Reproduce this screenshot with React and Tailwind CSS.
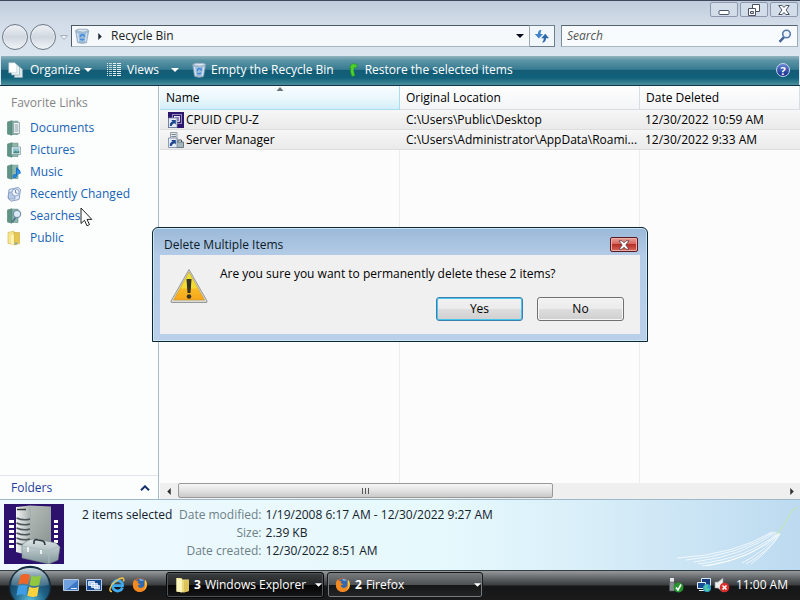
import React from 'react';

const BinIcon = ({ className }) => (
  <svg viewBox="0 0 16 16" className={className} aria-hidden="true">
    <path d="M1.500 2.500 4 1.200h9l1.800 1.300-2.300 12.200-4.500.8-4.500-1z" fill="#9fbcd6" stroke="#7f98ae" strokeWidth=".6" />
    <path d="M2 2.700 4.300 1.600h8.400l1.600 1.100L9 4z" fill="#dfeaf3" stroke="#8a9cad" strokeWidth=".4" />
    <path d="M3.500 5l1.200 8.500M12.700 5l-1.200 8.500" stroke="#d5e5f2" strokeWidth="1.200" />
    <path d="M6 9 7.500 6.500 9.800 7l.7 1.800M10 10.800l-1.800 1.200-2-.9" fill="none" stroke="#3f8ae0" strokeWidth="1.500" />
  </svg>
);

const Triangle = ({ className = 'h-1 w-2' }) => (
  <svg viewBox="0 0 8 4" className={className} aria-hidden="true">
    <path d="M0 0h8L4 4z" fill="currentColor" />
  </svg>
);

const PagesIcon = () => (
  <svg viewBox="0 0 16 16" className="size-4" aria-hidden="true">
    <path d="M6.500 5.500h6l2 2v8h-8z" fill="#d7e6ea" stroke="#8eaab4" strokeWidth=".6" />
    <path d="M3.500 3h6l2 2v8h-8z" fill="#eaf3f4" stroke="#8eaab4" strokeWidth=".6" />
    <path d="M.8.8h6l2 2v8h-8z" fill="#fff" stroke="#b2c6cc" strokeWidth=".6" />
  </svg>
);

const ViewsIcon = () => (
  <svg viewBox="0 0 14 14" className="size-[14px]" aria-hidden="true">
    {[0, 2, 4, 6, 8, 10, 12].map((y) => (
      <g key={y} fill="#e5f1f4">
        <rect x="0" y={y} width="1" height="1" />
        <rect x="2" y={y} width="3" height="1" opacity=".75" />
        <rect x="6" y={y} width="3" height="1" />
        <rect x="10" y={y} width="4" height="1" />
      </g>
    ))}
  </svg>
);

function PlaceIcon({ kind }) {
  if (kind === 'recent')
    return (
      <svg viewBox="0 0 16 16" className="size-4" aria-hidden="true">
        <path d="M3 3.500 12 1.500l2.500 2-1.500 10-8 1.700L2 12z" fill="#dfe8f5" stroke="#8b9fc4" />
        <path d="M4 6h5v7H2.500V8z" fill="#b8cae6" stroke="#7d96c1" strokeWidth=".7" />
        <circle cx="9.500" cy="6.500" r="3.600" fill="#edf3fc" stroke="#7a94bf" strokeWidth=".8" />
        <path d="M9.500 4v2.700l2 .6" fill="none" stroke="#4f6fa8" strokeWidth=".8" />
      </svg>
    );
  if (kind === 'public')
    return (
      <svg viewBox="0 0 16 16" className="size-4" aria-hidden="true">
        <path d="M2 2.500 8 1l.5 13.500-6.500-1z" fill="#f6e58d" stroke="#d2b64d" strokeWidth=".6" />
        <path d="M8 2.500h5.500v11L8 15z" fill="#e6c64f" stroke="#c9a93d" strokeWidth=".6" />
        <path d="M5 5.500 8 4v11l-3-1.400z" fill="#fff4b5" />
        <path d="M9 12.500h2v2H9z" fill="#77a9d6" />
      </svg>
    );
  return (
    <svg viewBox="0 0 16 16" className="size-4" aria-hidden="true">
      <path d="M1.500 2 6 .7v14.500L1.500 14z" fill="#5f9385" stroke="#4b7d71" strokeWidth=".6" />
      <path d="M6 1.200h6v13.300H6z" fill="#8db8ab" stroke="#5b8e82" strokeWidth=".6" />
      {kind === 'documents' && (
        <>
          <path d="M7.500 2.500h6v11h-6z" fill="#eef3f5" stroke="#8197a0" strokeWidth=".7" />
          <path d="M8.700 5h3.600M8.700 7h3.600M8.700 9h3.600M8.700 11h3.600" stroke="#71858f" strokeWidth=".8" />
        </>
      )}
      {kind === 'pictures' && (
        <>
          <path d="M5.500 5h9v7.500h-9z" fill="#f1f6f7" stroke="#76939c" strokeWidth=".7" />
          <path d="M6.800 6.300h6.400v5H6.800z" fill="#8cc3cf" />
          <path d="M6.800 11.300 9.500 8.500l1.700 1.300 2-1v2.500z" fill="#4a8979" />
        </>
      )}
      {kind === 'music' && (
        <path d="M10.500 11.500V3.500c.6 2.300 4.300 2.300 3.700 6M10.500 11.500c0 1.400-1.300 2.200-2.700 2-1.300-.3-1.100-2.500.8-2.700.8-.1 1.900 0 1.900.7z" fill="#2f94e6" stroke="#1b72c8" strokeWidth="1.100" />
      )}
      {kind === 'searches' && (
        <>
          <path d="M10 9 6.300 14" stroke="#51718e" strokeWidth="1.800" />
          <circle cx="11" cy="6" r="3.600" fill="#dcebf6" stroke="#7590a8" strokeWidth="1.200" />
        </>
      )}
    </svg>
  );
}

const Shortcut = () => (
  <>
    <path d="M.5 6h8.500v9.500H.5z" fill="#e6ecf5" stroke="#7485a3" strokeWidth=".8" />
    <path d="M1.800 14c0-3 1-4.200 2.700-4.500L3.200 8h4.600v4.600l-1.400-1.400C4.900 11.600 4.200 12.500 3.700 14z" fill="#20468f" />
  </>
);

const CpuIcon = () => (
  <svg viewBox="0 0 16 16" className="size-4 shrink-0" aria-hidden="true">
    <path d="M0 0h16v16H0z" fill="#2d1670" />
    <rect x="4.500" y="2.500" width="9" height="9" fill="none" stroke="#fff" strokeDasharray="1 1" />
    <rect x="6.500" y="4.500" width="5" height="5" fill="#8b7cbb" stroke="#fff" strokeWidth=".8" />
    <Shortcut />
  </svg>
);

const ServerIcon = () => (
  <svg viewBox="0 0 16 16" className="size-4 shrink-0" aria-hidden="true">
    <path d="M2.500.5H9V9H2.500z" fill="#e3e8eb" stroke="#7c8a94" strokeWidth=".8" />
    <path d="M3.500 2.500h4.500M3.500 4.500h4.500" stroke="#6d7a84" strokeWidth=".9" />
    <path d="M8 10h7.500v5.500H8z" fill="#a3b4ba" stroke="#52666e" strokeWidth=".8" />
    <path d="M10 10V8h3.500v2" fill="none" stroke="#4c5b62" />
    <Shortcut />
  </svg>
);

const ServerThumb = () => (
  <svg viewBox="0 0 60 60" className="size-[60px] shrink-0" aria-hidden="true">
    <defs>
      <linearGradient id="side" x1="0" x2="1" y2="1"><stop stopColor="#c2c8c5" /><stop offset="1" stopColor="#858f8b" /></linearGradient>
      <linearGradient id="front" x1="0" x2="1"><stop stopColor="#f3f5f5" /><stop offset="1" stopColor="#a4adab" /></linearGradient>
      <linearGradient id="box" y2="1" x2="0"><stop stopColor="#dfe7e8" /><stop offset="1" stopColor="#7f9498" /></linearGradient>
    </defs>
    <path d="M0 0h60v60H0z" fill="#2c126c" />
    {[17, 22, 27, 32, 37, 42].map((y) => (
      <g key={y} fill="#fff"><rect x="5" y={y - 1} width="5" height="3" /><rect x="50" y={y - 1} width="4" height="3" /></g>
    ))}
    <path d="M12 3 26 1.500 47 2.500v40L26 51z" fill="url(#side)" />
    <path d="M12 3 27 3.500V52l-15-4z" fill="url(#front)" />
    <path d="M13 5.500h9" stroke="#333" strokeWidth="1.500" />
    {[14, 19, 24, 29, 34, 39].map((y) => <path key={y} d={`M12.500 ${y}q7 3 13.500 1`} fill="none" stroke="#4c5557" strokeWidth="1.500" />)}
    <path d="M18 41q7-7 15-6l19 4 4 4-2 13-9 4-27-6z" fill="url(#box)" stroke="#6f8387" strokeWidth=".6" />
    <path d="M18 42l27 5 10-5M45 47v12" fill="none" stroke="#a8bbbf" strokeWidth="1" />
    <path d="M30 40v-3q1-2 4-1l5 1q2 1 2 4" fill="none" stroke="#303b40" strokeWidth="1.600" />
    <path d="M24 43v5M37 46v4" stroke="#f3f8f8" strokeWidth="1.800" />
  </svg>
);

const FolderIcon = () => (
  <svg viewBox="0 0 14 16" className="h-4 w-[14px] shrink-0" aria-hidden="true">
    <path d="M.5 1h5l1 1.500h6V14l-5 1.500-7-1z" fill="#ecd979" />
    <path d="M.5 1 6 2v13.500l-5.500-1z" fill="#fbf3bc" />
    <path d="m8 4 5-1.500V14l-5 1.500z" fill="#dcc35a" />
  </svg>
);

const FirefoxIcon = () => (
  <svg viewBox="0 0 16 16" className="size-4 shrink-0" aria-hidden="true">
    <circle cx="8" cy="8" r="7" fill="#e8651b" />
    <circle cx="8.500" cy="6.500" r="5" fill="#3268ae" />
    <path d="M7 2.500c2-1 4 0 5 1.500-2-.5-3 .5-5-1.500z" fill="#79b6e4" />
    <path d="M1.200 5 2.500 2.500 4 4.200 6.500 4 5.600 6l2.900 1.200-2.700 1.100c0 3 4.500 3.700 6.400.7l.2-3 1.200-2c2.600 5-1 11-6 11C2 15 0 9.500 1.200 5z" fill="#f38a20" />
    <path d="M12.500 4.500 13.700 3c2 4 1 8.500-2.200 10.500 2-2.500 2.500-5.500 1-9z" fill="#fbd047" />
  </svg>
);

const StartOrb = () => (
  <svg viewBox="0 0 44 44" className="size-11" aria-hidden="true">
    <defs>
      <radialGradient id="orb" cx=".5" cy=".85" r=".85"><stop stopColor="#5cc0dc" /><stop offset=".45" stopColor="#1f6287" /><stop offset="1" stopColor="#0c304e" /></radialGradient>
      <linearGradient id="shine" x2="0" y2="1"><stop stopColor="#e8f2f4" stopOpacity=".9" /><stop offset="1" stopColor="#7b9ba8" stopOpacity=".35" /></linearGradient>
    </defs>
    <circle cx="22" cy="22" r="20.500" fill="url(#orb)" stroke="#172c38" strokeWidth="1.500" />
    <path d="M3 20C4 8 12 3 22 3s18 5 19 17q-19 4-38 0z" fill="url(#shine)" />
    <path d="M12.500 10.500q4.500-2.500 9.500-.5L20 19.500q-5-2-9.700.3z" fill="#ee6528" />
    <path d="M23.500 10.500q4.500 2 9.500-.3L31.200 20q-4.700 2-9.700 0z" fill="#90c83f" />
    <path d="M10 21.500q4.500-2.500 9.700-.5L17.900 30.500q-5-2-9.500.3z" fill="#3e9de3" />
    <path d="M21.200 21.800q4.800 2 9.700-.3L29.200 31q-4.500 2-9.800-.2z" fill="#ffd33d" />
  </svg>
);

const toolItem = 'flex h-full items-center whitespace-nowrap';
const places = [
  ['documents', 'Documents'], ['pictures', 'Pictures'], ['music', 'Music'],
  ['recent', 'Recently Changed'], ['searches', 'Searches'], ['public', 'Public'],
];
const files = [
  { Icon: CpuIcon, name: 'CPUID CPU-Z', path: 'C:\\Users\\Public\\Desktop', date: '12/30/2022 10:59 AM' },
  { Icon: ServerIcon, name: 'Server Manager', path: 'C:\\Users\\Administrator\\AppData\\Roami...', date: '12/30/2022 9:33 AM' },
];
const captionButton = 'flex h-[15px] w-7 items-center justify-center rounded-[2px] border border-[#8c98ad] bg-[#d3dde9]';

function TitleBar() {
  return (
    <div className="flex h-6 shrink-0 justify-end gap-[2px] border-t border-[#41485c] pt-px pr-[2px]">
      <button aria-label="Minimize" className={captionButton}>
        <svg viewBox="0 0 12 12" className="size-3"><rect x="1" y="6.500" width="10" height="4" rx="1" fill="#fff" stroke="#4a5365" /></svg>
      </button>
      <button aria-label="Restore" className={captionButton}>
        <svg viewBox="0 0 12 12" className="size-3"><path d="M4.500.5h7v7h-7z" fill="#fff" stroke="#4a5365" /><path d="M.5 4.500h7v7h-7z" fill="#fff" stroke="#4a5365" /><path d="M2.500 7.500h3v2h-3z" fill="#d3dde9" stroke="#4a5365" /></svg>
      </button>
      <button aria-label="Close" className={captionButton}>
        <svg viewBox="0 0 12 12" className="size-3"><path d="M.7 1.500h3.500L6 3.500l1.800-2h3.500L8 6l3.300 4.500H7.800L6 8.500l-1.800 2H.7L4 6z" fill="#fff" stroke="#4a5365" /></svg>
      </button>
    </div>
  );
}

function AddressRow() {
  return (
    <div className="flex h-8 shrink-0 items-start pr-[2px] pl-[2px]">
      <div className="flex w-[69px] shrink-0 items-center">
        <button aria-label="Back" className="size-[26px] rounded-full border border-[#6f7984] bg-linear-to-b from-[#f0f3f7] via-[#cfd7df] to-[#f1f5f8] shadow-[inset_0_0_0_1px_#e9eef3]" />
        <button aria-label="Forward" className="ml-[2px] size-[26px] rounded-full border border-[#6f7984] bg-linear-to-b from-[#f0f3f7] via-[#cfd7df] to-[#f1f5f8] shadow-[inset_0_0_0_1px_#e9eef3]" />
        <button aria-label="Recent pages" className="ml-1">
          <svg viewBox="0 0 8 5" className="h-[5px] w-2"><path d="M.5.5h7L4 4.500z" fill="#f4f7fa" stroke="#a5b0bd" /></svg>
        </button>
      </div>
      <div className="mt-px flex h-[22px] min-w-0 grow items-center border border-t-[#4c5a63] border-r-[#9caab5] border-b-[#a9b7c0] border-l-[#4c5a63] bg-[#f5f9fc] pl-[2px]">
        <BinIcon className="size-4" />
        <svg viewBox="0 0 4 8" className="ml-2 h-[7px] w-1" aria-hidden="true"><path d="M0 0v8l4-4z" fill="#222b35" /></svg>
        <a href="#bin" className="ml-[9px] text-[#222]">Recycle Bin</a>
        <button aria-label="Previous locations" className="mr-[5px] ml-auto text-[#0a0a20]"><Triangle /></button>
      </div>
      <button aria-label="Refresh" className="mt-px flex h-[22px] w-[25px] shrink-0 items-center justify-center border border-l-0 border-[#6d7f8b] bg-[#f2f7fb]">
        <svg viewBox="0 0 16 14" className="h-[14px] w-4"><path d="M7.500 1C4.500 1 4 3 4 5H.8l4 4.500L9 5H6.500c0-1.500.2-2.500 1-4z" fill="#3f83c9" /><path d="M8 13.500c3 0 4-2 4-4.300h3L11.200 4.700 7.200 9.200h2.500c0 2-.5 3-1.700 4.300z" fill="#2c69ac" /></svg>
      </button>
      <label className="mt-px ml-[6px] flex h-[22px] w-[237px] shrink-0 items-center border border-t-[#55636d] border-r-[#9caab5] border-b-[#a9b7c0] border-l-[#7c8a94] bg-[#f7fbfe] px-[5px]">
        <input aria-label="Search" placeholder="Search" className="min-w-0 grow bg-transparent italic outline-none placeholder:text-[#555]" />
        <svg viewBox="0 0 14 14" className="size-[14px]" aria-hidden="true"><path d="M6 8.200 1.500 12.800" stroke="#44618f" strokeWidth="2.400" /><circle cx="8.500" cy="5" r="3.800" fill="#eef6fc" stroke="#5779ae" strokeWidth="1.600" /></svg>
      </label>
    </div>
  );
}

function Toolbar() {
  return (
    <div className="mx-px flex h-[29px] shrink-0 items-center bg-[linear-gradient(180deg,#93b5bf_0%,#5c94a6_15%,#377b91_46%,#145c76_50%,#11617a_75%,#4a8f9c_100%)] pr-[9px] pb-px pl-[7px] text-white">
      <button className={toolItem}><PagesIcon /><span className="ml-[6px] w-12 text-left">Organize</span><Triangle className="ml-[6px] h-1 w-2" /></button>
      <button className={`${toolItem} ml-[15px]`}><ViewsIcon /><span className="ml-[6px] w-8 text-left">Views</span><Triangle className="ml-3 h-1 w-2" /></button>
      <button className={`${toolItem} ml-3`}><BinIcon className="size-4" /><span className="ml-1">Empty the Recycle Bin</span></button>
      <button className={`${toolItem} ml-[14px]`}>
        <svg viewBox="0 0 10 14" className="h-[14px] w-[10px]" aria-hidden="true"><path d="M4 13.500C2.500 10 2 7 3 5L1.500 5.500 3.500.8 9 1.200 8.500 5 6.500 4.300C5.500 6 5.500 9 7 12.500z" fill="#4ed02d" stroke="#1f8f27" strokeWidth=".6" /></svg>
        <span className="ml-[7px]">Restore the selected items</span>
      </button>
      <button aria-label="Help" className="ml-auto flex size-[14px] items-center justify-center rounded-full border border-[#c5d4ef] bg-linear-to-b from-[#6a86d2] to-[#12278a] text-[11px] font-bold leading-none">?</button>
    </div>
  );
}

function Sidebar() {
  return (
    <aside className="flex w-[159px] shrink-0 flex-col border-r border-[#a9bcc9] bg-[#fcfdfd]">
      <h2 className="mt-[6px] pl-[11px] leading-[22px] text-[#858585]">Favorite Links</h2>
      <nav className="mt-[3px]">
        {places.map(([kind, label]) => (
          <a key={kind} href={`#${kind}`} className="flex h-[22px] items-center gap-2 pl-[6px] whitespace-nowrap text-[#1763b5]">
            <PlaceIcon kind={kind} />{label}
          </a>
        ))}
      </nav>
      <button className="mt-auto flex h-6 items-center justify-between border-t border-[#dfe5ea] pr-2 pl-[11px] text-[#1d3d9c]">
        Folders
        <svg viewBox="0 0 10 6" className="h-[6px] w-[10px]" aria-hidden="true"><path d="M1 5.200 5 1.300l4 3.900" fill="none" stroke="#16306e" strokeWidth="2" /></svg>
      </button>
    </aside>
  );
}

function FileList() {
  const line = 'border-r border-[#ececec]';
  const cell = 'h-5 border-b border-[#dedede] p-0';
  const head = 'h-6 border-r border-b border-[#d9dee2] bg-linear-to-b from-white to-[#f3f4f6] p-0 pt-px pl-[6px] text-left font-normal';
  return (
    <main className="flex min-w-0 grow flex-col bg-[#fcfcfc] pl-px">
      <table className="w-full grow table-fixed border-separate border-spacing-0 whitespace-nowrap text-black">
        <thead>
          <tr>
            <th aria-sort="ascending" className="relative h-6 w-[240px] border-r border-b border-[#a9dcec] bg-linear-to-b from-[#f8fdff] via-[#ecf8fd] to-[#d3eff8] p-0 pt-px pl-[6px] text-left font-normal">
              Name
              <svg viewBox="0 0 7 4" className="absolute top-px left-1/2 h-1 w-[7px] -translate-x-1/2" aria-hidden="true"><path d="M0 4h7L3.500 0z" fill="#66737a" /></svg>
            </th>
            <th className={`${head} w-[240px]`}>Original Location</th>
            <th className={head}>Date Deleted</th>
          </tr>
        </thead>
        <tbody>
          {files.map(({ Icon, name, path, date }) => (
            <tr key={name} className="h-5 bg-linear-to-b from-[#f7f7f7] to-[#e9e9e9]">
              <td className={`${cell} pl-2`}><span className="flex items-center gap-[2px]"><Icon />{name}</span></td>
              <td className={`${cell} pl-[6px]`}>{path}</td>
              <td className={`${cell} pl-[5px]`}>{date}</td>
            </tr>
          ))}
          <tr aria-hidden="true"><td className={line} /><td className={line} /><td /></tr>
        </tbody>
      </table>
      <div className="flex h-4 shrink-0 items-center bg-[#efefef] text-[#303030]">
        <button aria-label="Scroll left" className="flex w-[18px] shrink-0 justify-center"><svg viewBox="0 0 4 8" className="h-[7px] w-1"><path d="M4 0v8L0 4z" fill="currentColor" /></svg></button>
        <div className="flex h-full grow">
          <div className="flex h-[15px] w-[62%] items-center justify-center gap-[2px] rounded-[2px] border border-[#999] bg-linear-to-b from-[#f6f6f6] via-[#e3e3e3] to-[#c9c9c9]">
            {[0, 1, 2].map((n) => <span key={n} className="h-[6px] w-px bg-[#555]" />)}
          </div>
        </div>
        <button aria-label="Scroll right" className="flex w-[17px] shrink-0 justify-center"><svg viewBox="0 0 4 8" className="h-[7px] w-1"><path d="M0 0v8l4-4z" fill="currentColor" /></svg></button>
      </div>
    </main>
  );
}

function DetailsPane() {
  return (
    <section className="relative flex h-[71px] shrink-0 border-t border-[#9db9c8] bg-[linear-gradient(90deg,#eff9ff_0%,#e6f9fd_55%,#d7edf8_75%,#bcdaf0_100%)] pt-1 pl-1">
      <svg viewBox="0 0 126 66" className="absolute right-0 bottom-0 h-[66px] w-[126px]" aria-hidden="true">
        <g fill="none" stroke="#fff" strokeWidth="1" opacity=".75">
          <path d="M3 54Q60 51 98 28M12 56Q66 51 100 28M20 58Q70 52 102 28M24 60Q75 54 103 29M28 62Q78 56 104 29M33 62Q80 54 106 29M68 59Q90 48 104 30M72 60Q94 48 105 30M77 60Q96 46 106 30" />
        </g>
        <path d="M102 31Q110 23 117 8q3-4 7-4" fill="none" stroke="#c3e9a5" strokeWidth="1.500" opacity=".6" />
      </svg>
      <ServerThumb />
      <p className="mt-[2px] ml-[18px] w-[94px] shrink-0 leading-[18px] whitespace-nowrap text-[#10202c]">2 items selected</p>
      <dl className="mt-[2px] ml-[3px] grid grid-cols-[auto_auto] content-start gap-x-1 leading-[18px] whitespace-nowrap text-[#14222c]">
        <dt className="text-right text-[#6d7f86]">Date modified:</dt><dd>1/19/2008 6:17 AM - 12/30/2022 9:27 AM</dd>
        <dt className="text-right text-[#6d7f86]">Size:</dt><dd>2.39 KB</dd>
        <dt className="text-right text-[#6d7f86]">Date created:</dt><dd>12/30/2022 8:51 AM</dd>
      </dl>
    </section>
  );
}

function Taskbar() {
  return (
    <footer className="relative flex h-[30px] shrink-0 items-center border-t border-[#333c40] bg-[linear-gradient(180deg,#969a9c_0%,#606466_25%,#3b3e40_48%,#151617_52%,#1b1b1c_100%)] pb-px pr-3 pl-[63px] text-white">
      <button aria-label="Start" className="absolute -top-[6px] left-2"><StartOrb /></button>
      <div className="flex w-[103px] shrink-0 items-center gap-[7px]">
        <button aria-label="Show desktop">
          <svg viewBox="0 0 16 16" className="size-4"><path d="M.5 2.500h15v11H.5z" fill="#3c77c8" stroke="#b6cae2" /><path d="M1 3h14L3 13H1z" fill="#86b4e8" opacity=".7" /><path d="M8 11.500h6" stroke="#e5eef8" /></svg>
        </button>
        <button aria-label="Switch windows">
          <svg viewBox="0 0 16 16" className="size-4"><path d="M.5 2.500h15v11H.5z" fill="#164b96" stroke="#b6cae2" /><path d="M2.500 4.500h6v4h-6zM5.500 6.500h6v4h-6zM8.500 8.500h5v3.500h-5z" fill="#a8caef" stroke="#fff" strokeWidth=".7" /></svg>
        </button>
        <button aria-label="Internet Explorer">
          <svg viewBox="0 0 16 16" className="size-4"><path d="M13.500 10.500A5.200 5.200 0 1 1 13.500 7v1.700H4" fill="none" stroke="#40aaf0" strokeWidth="2.800" /><path d="M3 14.500C-1 15 1 8 7 4c5-4 9-4 7.500.5" fill="none" stroke="#f2c64b" strokeWidth="1.400" /></svg>
        </button>
        <button aria-label="Firefox"><FirefoxIcon /></button>
      </div>
      <button className="flex h-[26px] w-[158px] shrink-0 items-center rounded-[3px] border border-[#08090a] bg-[linear-gradient(180deg,#3b3e40_0%,#242627_48%,#050505_52%,#161617_100%)] pr-px pl-[9px] shadow-[inset_0_0_0_1px_#4f5355]">
        <FolderIcon /><b className="ml-1">3</b><span className="ml-1 whitespace-nowrap">Windows Explorer</span><Triangle className="ml-auto h-1 w-[7px] shrink-0" />
      </button>
      <button className="ml-[3px] flex h-[26px] w-[156px] shrink-0 items-center rounded-[3px] border border-[#17191a] bg-[linear-gradient(180deg,#777b7e_0%,#515456_48%,#151616_52%,#252627_100%)] pr-px pl-[7px] shadow-[inset_0_0_0_1px_#777b7d]">
        <FirefoxIcon /><b className="ml-1">2</b><span className="ml-1">Firefox</span><Triangle className="ml-auto h-1 w-[7px] shrink-0" />
      </button>
      <div className="ml-auto flex items-center">
        <svg viewBox="0 0 16 16" className="size-4" aria-hidden="true"><path d="M2 1h4v4H2z" fill="#e1e5e7" /><path d="M1.500 5h5v9h-5z" fill="#858d90" stroke="#4b5153" strokeWidth=".6" /><circle cx="10.500" cy="10.500" r="5" fill="#26952f" /><path d="m8 10.500 2 2.500 3-5.500" fill="none" stroke="#fff" strokeWidth="1.600" /></svg>
        <svg viewBox="0 0 16 16" className="ml-3 size-4" aria-hidden="true"><path d="M5.500 1.500h9v7h-9z" fill="#153d7d" stroke="#d8e6f2" /><path d="M1.500 5.500h8v6h-8zM3 13.500h5" fill="#174a90" stroke="#e5eff7" /><circle cx="11" cy="11" r="4" fill="#2c9fd2" /><path d="M8 10q2-3 4-2l-1 3 3 1-2 2.500-3-1z" fill="#54c8a2" /></svg>
        <svg viewBox="0 0 16 16" className="ml-[2px] size-4" aria-hidden="true"><path d="M1 5h3l5-4v14l-5-4H1z" fill="#eef0f0" stroke="#92999d" strokeWidth=".7" /><circle cx="10.500" cy="10.500" r="4.800" fill="#d92d2c" /><path d="m8.500 8.500 4 4m0-4-4 4" stroke="#fff" strokeWidth="1.600" /></svg>
        <time className="ml-[6px] whitespace-nowrap">11:00 AM</time>
      </div>
    </footer>
  );
}

function DeleteDialog() {
  return (
    <div role="dialog" aria-labelledby="dialog-title" className="absolute top-[227px] left-1/2 flex w-[496px] -translate-x-1/2 flex-col rounded-t-[6px] border border-[#0d2735] bg-linear-to-b from-[#9ab9d8] from-0% via-[#b4cce7] via-25% to-[#bad0ea] px-[7px] pb-[7px] shadow-[inset_0_0_0_1px_#cce5f2]">
      <header className="flex h-[27px] items-center justify-between pt-[6px] pr-[2px] pl-1">
        <h1 id="dialog-title" className="text-[#0c1b2a]">Delete Multiple Items</h1>
        <button aria-label="Close dialog" className="flex h-[15px] w-7 items-center justify-center rounded-[2px] border border-[#5b1820] bg-[linear-gradient(180deg,#e9a198_0%,#d4675d_45%,#b52f28_50%,#d9685a_100%)] shadow-[inset_0_0_0_1px_#e9afa8]">
          <svg viewBox="0 0 12 10" className="h-[10px] w-3"><path d="M1 .8h3l2 2 2-2h3L7.800 5 11 9.200H8l-2-2-2 2H1L4.200 5z" fill="#fff" stroke="#5b3a40" strokeWidth=".8" /></svg>
        </button>
      </header>
      <div className="flex bg-[#f0f0f0] pt-2 pr-4 pb-[13px] pl-[10px] text-black">
        <svg viewBox="0 0 38 36" className="mt-[5px] h-9 w-[38px] shrink-0" aria-hidden="true">
          <defs><linearGradient id="warn" x2="0" y2="1"><stop stopColor="#e5e338" /><stop offset=".55" stopColor="#f5db31" /><stop offset=".62" stopColor="#f9b923" /><stop offset="1" stopColor="#f7a51b" /></linearGradient></defs>
          <path d="M19 1.500 37 33q.5 1.500-1 1.500H2q-1.500 0-1-1.500z" fill="#d8d9d6" stroke="#96999a" />
          <path d="M19 4 34.500 32h-31z" fill="url(#warn)" stroke="#c49528" strokeWidth=".6" />
          <path d="M16.500 11h5l-1 14h-3z" fill="#34312a" /><circle cx="19" cy="28.500" r="2.300" fill="#34312a" />
        </svg>
        <div className="ml-3 flex grow flex-col">
          <p className="leading-[22px]">Are you sure you want to permanently delete these 2 items?</p>
          <div className="mt-3 flex justify-end gap-[14px]">
            <button autoFocus className="h-6 w-[87px] rounded-[3px] border border-[#3c7fb1] bg-[linear-gradient(180deg,#f2f2f2_0%,#ebebeb_48%,#dddddd_52%,#cfcfcf_100%)] shadow-[inset_0_0_0_1px_#48c5ea] outline-none">Yes</button>
            <button className="h-6 w-[87px] rounded-[3px] border border-[#707070] bg-[linear-gradient(180deg,#f2f2f2_0%,#ebebeb_48%,#dddddd_52%,#cfcfcf_100%)] shadow-[inset_0_0_0_1px_#f6f6f6]">No</button>
          </div>
        </div>
      </div>
    </div>
  );
}

export default function App() {
  return (
    <div className="relative flex h-screen flex-col overflow-hidden bg-[linear-gradient(180deg,#c0cbdb_0px,#d3dde9_24px,#dbe6f0_56px)] font-['Open_Sans','Noto_Sans',sans-serif] text-[12px]">
      <TitleBar />
      <AddressRow />
      <Toolbar />
      <div className="flex min-h-0 grow border-t border-[#12344a]">
        <Sidebar />
        <FileList />
      </div>
      <DetailsPane />
      <Taskbar />
      <DeleteDialog />
      <svg viewBox="0 0 13 20" className="pointer-events-none absolute top-[207px] left-20 h-5 w-[13px]" aria-hidden="true">
        <path d="M1 1v15.500l3.500-3.200 2.500 5.500 2.500-1.200-2.500-5.200h4.800z" fill="#fff" stroke="#222" />
      </svg>
    </div>
  );
}
